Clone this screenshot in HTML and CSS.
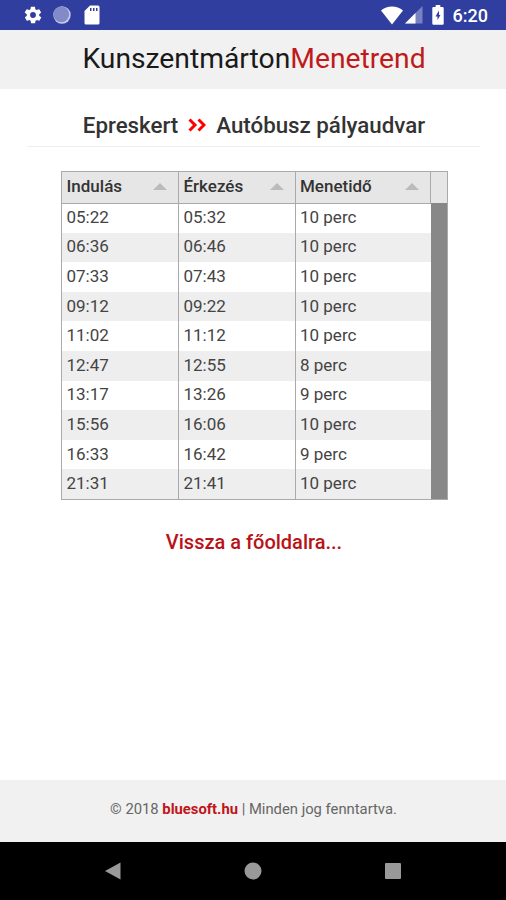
FILE: index.html
```html
<!DOCTYPE html>
<html lang="hu">
<head>
    <meta charset="UTF-8">
    <meta name="viewport" content="width=device-width, initial-scale=1.0">
    <title>KunszentmártonMenetrend</title>
    <link rel="stylesheet" href="styles.css">
</head>
<body>
<div class="statusbar">
    <svg class="icon-gear" width="20" height="20" viewBox="0 0 24 24"><path d="M19.4 13c0-.3.1-.6.1-1s0-.7-.1-1l2.1-1.600c.2-.2.3-.4.1-.7l-2-3.400c-.1-.2-.4-.3-.6-.2l-2.500 1c-.5-.4-1.100-.7-1.700-1l-.4-2.600c0-.3-.2-.5-.5-.5h-4c-.2 0-.4.200-.5.5l-.4 2.600c-.6.3-1.200.6-1.700 1l-2.500-1c-.2-.1-.5 0-.6.2l-2 3.400c-.1.200-.1.500.1.7L4.600 11c0 .3-.1.700-.1 1s0 .7.100 1l-2.100 1.600c-.2.200-.2.400-.1.700l2 3.400c.1.200.4.300.6.2l2.500-1c.5.400 1.100.7 1.700 1l.4 2.600c0 .300.2.5.5.5h4c.2 0 .5-.2.500-.5l.4-2.600c.6-.3 1.200-.6 1.700-1l2.500 1c.2.100.5 0 .6-.2l2-3.400c.1-.200.1-.5-.1-.7zM12 15.500a3.500 3.500 0 1 1 0-7 3.500 3.500 0 0 1 0 7z"/></svg>
    <svg class="icon-sync" width="18" height="18" viewBox="0 0 18 18"><circle cx="9" cy="9" r="8.700" fill="#c9cde9"/><circle cx="8.300" cy="8.300" r="7.900" fill="#828bc8"/></svg>
    <svg class="icon-card" width="16" height="20" viewBox="0 0 16 20"><path fill-rule="evenodd" d="M6 .5h8a1.500 1.500 0 0 1 1.500 1.500v16a1.500 1.500 0 0 1-1.500 1.500H2A1.500 1.500 0 0 1 .5 18V6zM6 3v3h1.500V3zm3 0v3h1.500V3zm3 0v3h1.500V3z"/></svg>
    <svg class="icon-wifi" width="22" height="19" viewBox="0 0 22 19"><path d="M11 18.500L0 4.500C3 1.900 7 .5 11 .5s8 1.400 11 4z"/></svg>
    <svg class="icon-signal" width="18" height="18" viewBox="0 0 18 18"><path opacity=".35" d="M0 17.500L17.500 0v17.500z"/><path d="M0 17.500L10.500 7v10.500z"/></svg>
    <svg class="icon-battery" width="12" height="20" viewBox="0 0 12 20"><path fill-rule="evenodd" d="M3.700 0h4.600v2H10.500A1.200 1.200 0 0 1 11.700 3.200v15.300a1.200 1.200 0 0 1-1.200 1.200h-9A1.200 1.200 0 0 1 .3 18.500V3.200A1.200 1.200 0 0 1 1.500 2h2.200zM7 5.500L3.500 11.500h2V15L8.500 10H7z"/></svg>
    <span class="clock">6:20</span>
</div>

<header class="header">Kunszentmárton<span>Menetrend</span></header>

<main class="content">
    <h1 class="route">
        <span>Epreskert</span>
        <svg width="18" height="14" viewBox="0 0 18 14"><path d="M1.500 1.500L7 7l-5.500 5.500M10.500 1.500L16 7l-5.500 5.500"/></svg>
        <span>Autóbusz pályaudvar</span>
    </h1>

    <!-- Menetrend -->
    <div class="timetable">
        <table>
            <thead>
                <tr><th>Indulás</th><th>Érkezés</th><th>Menetidő</th></tr>
            </thead>
            <tbody>
                <tr><td>05:22</td><td>05:32</td><td>10 perc</td></tr>
                <tr><td>06:36</td><td>06:46</td><td>10 perc</td></tr>
                <tr><td>07:33</td><td>07:43</td><td>10 perc</td></tr>
                <tr><td>09:12</td><td>09:22</td><td>10 perc</td></tr>
                <tr><td>11:02</td><td>11:12</td><td>10 perc</td></tr>
                <tr><td>12:47</td><td>12:55</td><td>8 perc</td></tr>
                <tr><td>13:17</td><td>13:26</td><td>9 perc</td></tr>
                <tr><td>15:56</td><td>16:06</td><td>10 perc</td></tr>
                <tr><td>16:33</td><td>16:42</td><td>9 perc</td></tr>
                <tr><td>21:31</td><td>21:41</td><td>10 perc</td></tr>
            </tbody>
        </table>
        <div class="scroll"></div>
    </div>

    <a class="back">Vissza a főoldalra...</a>
</main>

<footer class="footer">
    <p>© 2018 <b>bluesoft.hu</b> | Minden jog fenntartva.</p>
</footer>

<nav class="navbar">
    <svg width="18" height="18" viewBox="0 0 18 18"><path d="M16.500 .5v17L1 9z"/></svg>
    <svg width="18" height="18" viewBox="0 0 18 18"><circle cx="9" cy="9" r="8.500"/></svg>
    <svg width="18" height="18" viewBox="0 0 18 18"><rect x="1" y="1" width="16" height="16" rx="1"/></svg>
</nav>
</body>
</html>
```

FILE: styles.css
```css
* {
    box-sizing: border-box;
}

body {
    display: flex;
    flex-direction: column;
    height: 900px;
    margin: 0;
    background: #fff;
    color: #333;
    font-family: Roboto, sans-serif;
}

.statusbar {
    display: flex;
    align-items: center;
    height: 30px;
    padding: 0 18px 0 23px;
    background: #303f9f;
    color: #fff;
    fill: #fff;
}

.icon-sync {
    margin-left: 10px;
}

.icon-card {
    margin-left: 13px;
}

.icon-wifi {
    margin-left: auto;
}

.icon-signal {
    margin-left: 2px;
}

.icon-battery {
    margin-left: 9px;
}

.clock {
    margin-left: 9px;
    padding-top: 2px;
    font-size: 18px;
    font-weight: 500;
    line-height: 20px;
}

.header {
    height: 59px;
    padding-left: 2px;
    background: #f1f1f1;
    color: #1a1a1a;
    font-size: 28.25px;
    font-weight: 400;
    line-height: 58px;
    text-align: center;
}

.header span {
    color: #c01a1a;
}

.content {
    display: flex;
    flex: 1;
    flex-direction: column;
    align-items: center;
}

.route {
    display: flex;
    align-items: center;
    justify-content: center;
    gap: 10px;
    width: 453px;
    height: 58px;
    margin: 0;
    padding: 15px 0 0 2px;
    border-bottom: 1px solid #eee;
    font-size: 22.3px;
    font-weight: 500;
}

.route svg {
    fill: none;
    stroke: #f00;
    stroke-width: 3;
}

.timetable {
    display: flex;
    width: 387px;
    height: 329px;
    margin: 24px 0 0 3px;
    border: 1px solid #aaa;
}

table {
    width: 369px;
    height: 327px;
    border-collapse: collapse;
    table-layout: fixed;
}

th,
td {
    padding: 0 0 2px 4.5px;
    border-right: 1px solid #aaa;
    font-size: 17px;
    text-align: left;
}

th:nth-child(1),
th:nth-child(2) {
    width: 116.5px;
}

th {
    height: 31px;
    background: #e6e6e6;
    border-bottom: 1px solid #aaa;
    font-weight: 500;
}

/* rendezés jelölő */
th::after {
    content: "";
    float: right;
    margin: 7px 11px 0 0;
    border: 7px solid transparent;
    border-top: 0;
    border-bottom: 7px solid #bbb;
}

td {
    height: 29.6px;
    color: #444;
    font-weight: 400;
}

td:last-child {
    border-right: 0;
}

tbody tr:nth-child(even) {
    background: #eee;
}

.scroll {
    flex: 1;
    background: #888;
    border-top: 31px solid #e6e6e6;
}

.back {
    margin: 30px 0 0 2px;
    color: #b91217;
    font-size: 20px;
    font-weight: 500;
}

.footer {
    height: 62px;
    padding-left: 1px;
    background: #f1f1f1;
    color: #666;
    font-size: 14.8px;
    line-height: 58px;
    text-align: center;
}

.footer p {
    margin: 0;
}

.footer b {
    color: #c0151a;
}

.navbar {
    display: flex;
    align-items: center;
    justify-content: center;
    gap: 122px;
    height: 58px;
    background: #000;
    fill: #999;
}
```
